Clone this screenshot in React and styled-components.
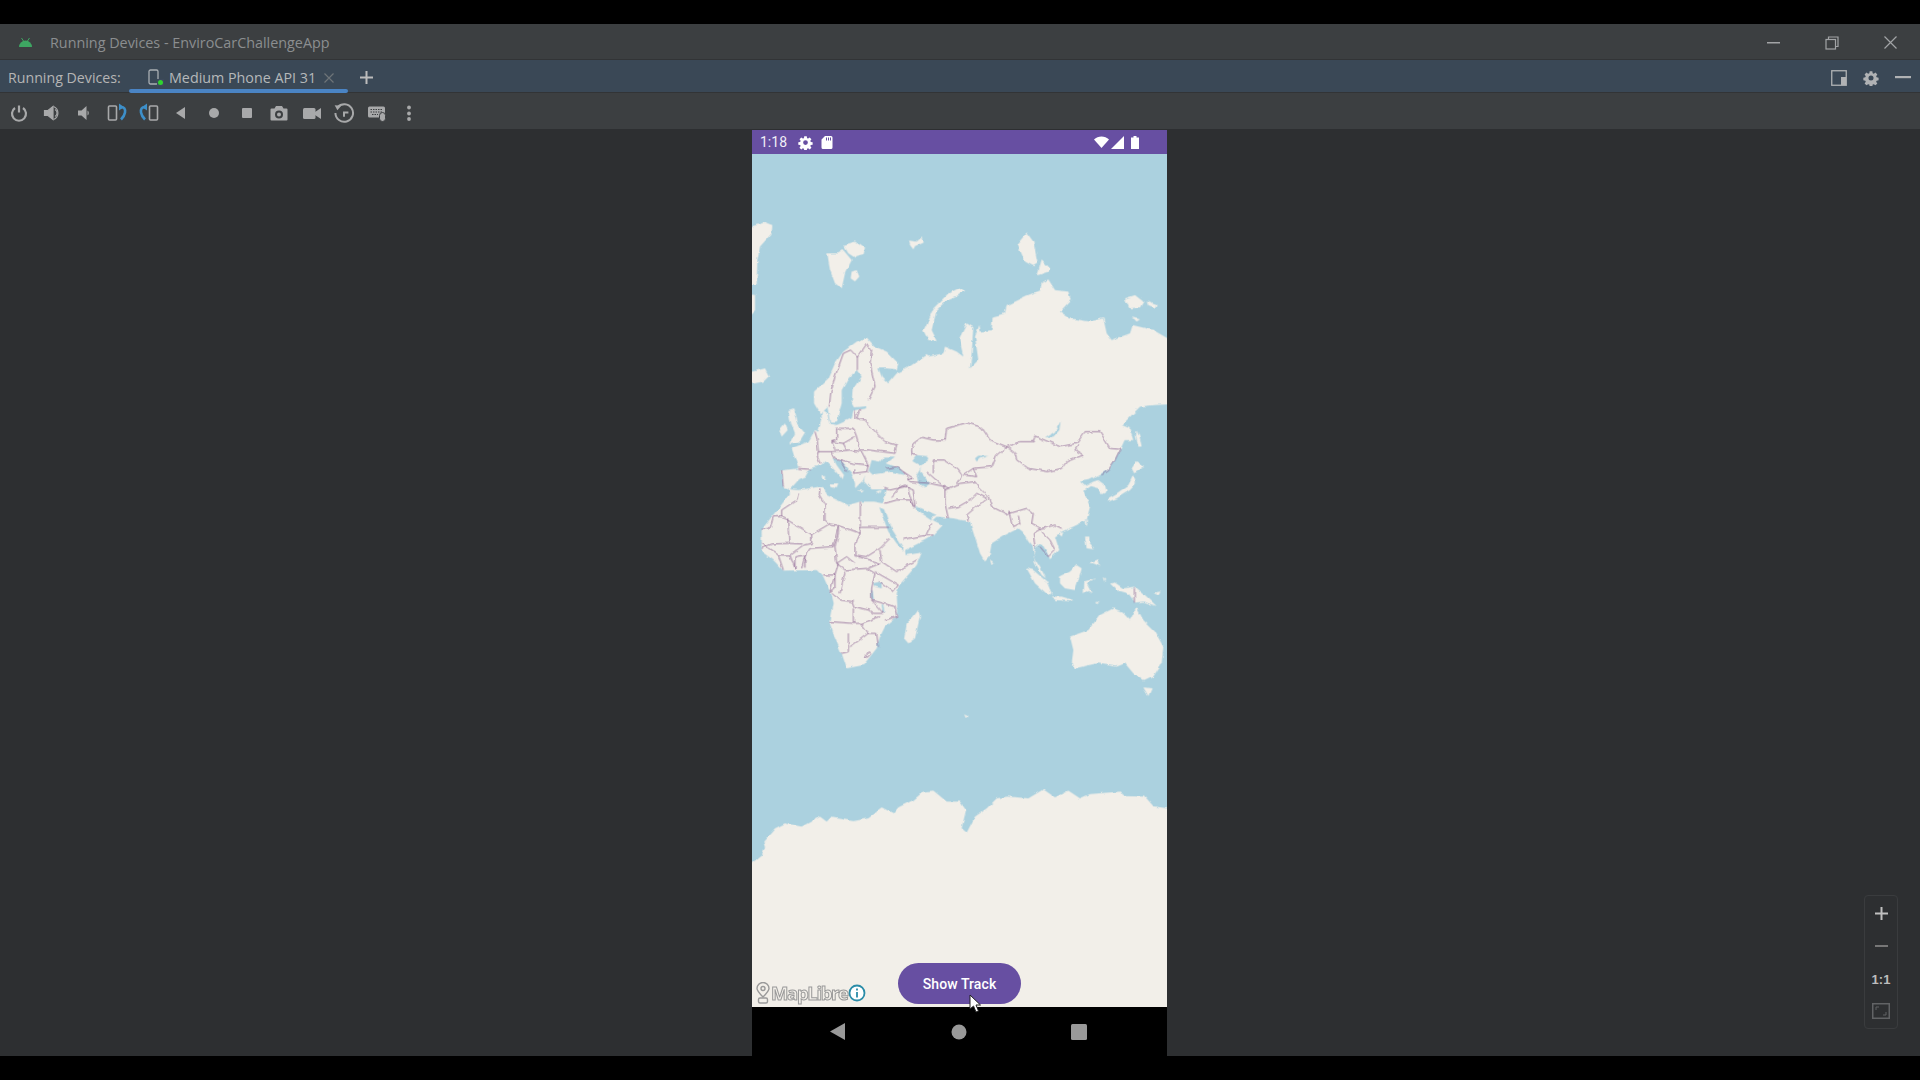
import React from "react";
import styled, { createGlobalStyle } from "styled-components";

const GlobalStyle = createGlobalStyle`
  html, body { margin: 0; padding: 0; background: #000; }
  body { font-family: "Open Sans", "Liberation Sans", sans-serif; }
`;

const WATER = "#abd1df";
const LAND = "#f2efe9";
const PURPLE = "#674fa2";
const BORDER = "#7d4f86";

// Map outlines are traced from crops, so numbers are in crop units (3 per screen px).
const arctic = [
  "16,325 75,307 97,315 95,340 60,380 52,420 50,495 16,500",
  "16,520 45,525 45,570 16,600",
  "16,760 75,745 87,768 70,785 16,795",
  "262,400 295,400 310,390 335,420 315,460 305,505 285,490 270,450",
  "310,375 345,365 375,385 370,405 345,413 325,400",
  "335,455 350,450 358,470 345,484 332,475",
  "507,362 530,365 545,352 548,368 525,378 520,388 510,375",
  "832,372 860,338 880,365 893,430 880,438 855,425",
  "905,418 930,445 925,455 892,466",
  "550,632 565,600 580,565 625,520 660,503 672,512 650,530 615,545 590,570 575,630 590,660 565,660",
  "1155,535 1185,525 1210,545 1200,562 1168,565",
  "1220,545 1250,555 1245,566 1225,558",
  "1178,592 1200,598 1190,605",
  "400,960 385,870 405,855 345,862 335,845 338,810 365,770 350,750 325,775 305,810 305,850 290,905 270,905 262,860 240,880 222,850 222,815 265,775 285,730 310,695 350,665 380,653 405,680 440,695 475,730 470,748 440,745 415,745 425,770 445,790 470,760 500,745 560,705 565,710 610,700 615,680 650,695 670,710 658,655 680,610 700,622 695,700 690,745 715,720 705,650 718,615 722,635 755,630 758,590 795,580 800,555 860,527 900,512 905,490 925,478 945,510 985,515 992,540 960,575 990,595 1050,605 1090,595 1100,640 1115,660 1170,640 1178,615 1240,630 1300,665 1300,845 1200,858 1145,915 1170,930 1180,960",
];

const continents = [
  "380,0 1300,0 1300,12 1240,15 1200,20 1145,75 1170,85 1140,150 1110,205 1075,225 1045,240 1020,245 1035,258 1060,245 1075,240 1095,255 1100,275 1085,283 1075,265 1050,258 1030,272 1050,320 1040,360 1000,380 965,395 945,410 958,450 930,478 920,455 905,430 885,445 880,470 905,510 918,535 905,525 885,490 878,440 865,425 848,395 835,385 795,405 755,430 748,470 735,485 720,460 700,395 690,365 665,360 640,355 590,350 578,360 608,375 580,405 555,420 495,450 497,465 545,458 530,495 478,555 470,580 472,620 470,650 435,680 420,710 410,745 370,795 320,805 305,760 285,715 268,665 278,610 270,575 250,530 230,510 130,512 100,480 65,455 65,390 95,350 120,320 150,280 145,265 130,262 122,212 175,205 155,145 205,125 225,90 235,95 245,55 245,30 262,40 268,70 290,75 335,55 340,32 378,25",
  "145,30 160,25 170,70 195,100 180,125 148,130 165,100 150,60",
  "118,90 135,70 143,90 125,110",
  "1190,90 1200,115 1205,140 1195,140 1188,110",
  "1175,205 1190,183 1215,198 1195,212 1183,220",
  "1180,225 1188,250 1170,270 1130,295 1105,305 1103,295 1130,280 1165,255",
  "1037,365 1045,358 1040,380",
  "1035,410 1048,410 1048,430 1062,448 1040,445",
  "1050,488 1075,478 1080,498 1060,490",
  "955,400 970,397 965,410",
  "750,478 762,485 755,497",
  "860,505 880,510 920,545 935,580 925,585 885,550",
  "935,590 965,590 1000,600 990,604 950,600",
  "960,530 990,515 1010,495 1025,505 1020,525 1005,570 975,565 960,550",
  "1030,545 1070,535 1040,550 1055,580 1040,570 1028,580",
  "1088,532 1095,535 1093,545",
  "1110,550 1125,548 1150,565 1185,560 1215,585 1250,618 1210,605 1185,608 1165,580 1130,570",
  "1240,578 1262,575 1255,587",
  "1062,608 1080,603 1068,612",
  "535,630 540,650 525,715 505,730 492,715 500,670 520,650",
  "990,710 1045,690 1080,645 1120,625 1145,635 1170,660 1190,622 1210,660 1245,695 1270,740 1265,790 1240,830 1212,843 1180,820 1155,790 1130,800 1070,790 1005,805 995,790 1000,750",
  "1210,862 1235,865 1225,888",
  "672,940 683,945 678,952",
];

const seas = [
  "150,268 175,240 195,232 210,205 240,195 255,180 270,195 305,235 310,245 298,262 312,225 290,195 280,175 300,180 335,220 345,250 345,265 370,240 375,225 372,245 395,268 440,268 432,300 428,310 400,305 360,305 325,315 260,285 250,262 240,260 175,270",
  "385,215 395,180 420,185 432,170 465,170 440,190 480,205 495,225 450,215 420,220 395,224",
  "517,183 530,165 560,168 565,180 545,195 540,215 570,250 555,262 535,250 530,225 545,200",
  "418,322 432,328 450,378 470,410 490,440 490,452 470,430 445,395",
  "525,318 545,325 590,345 575,350 575,362 550,345 535,335",
  "918,112 945,95 962,63 958,90 940,110",
  "705,175 715,167 745,168 720,175 710,185",
  "400,550 425,545 425,565 405,560",
  "393,570 398,572 402,600 396,598",
  "425,612 430,614 433,640 428,638",
];

const medIslands = [
  "270,250 295,250 290,262 275,258",
  "245,225 255,225 254,240 246,240",
  "410,275 425,270 420,280",
  "350,272 372,272 365,278",
];

const borders = [
  "361,305 361,400", "361,382 447,382",
  "361,400 290,375 268,372 215,403 125,350", "125,350 125,330 170,300 175,280",
  "255,310 255,360 268,372", "240,265 238,285 250,305 255,310",
  "125,350 100,350 90,385 65,388", "143,355 147,430 95,432 65,445",
  "215,403 215,430 190,435 150,465", "147,430 185,432",
  "295,378 280,440 210,445 195,470 195,500",
  "295,378 295,400 285,440 290,490 320,470 345,490",
  "361,400 345,435 345,465 380,470 420,445 450,415",
  "420,450 425,485 470,515 530,480", "385,505 420,490 355,470",
  "405,515 475,555 460,575 420,545",
  "290,490 315,510 380,505 405,520 395,565 395,600 430,640 400,640 385,630 345,620 340,605 300,600 275,580",
  "315,515 300,580", "250,525 285,525 285,565 270,575 295,490",
  "395,600 465,620 470,650 435,660",
  "268,665 340,670 340,625", "325,700 325,755 305,760", "340,670 365,670 390,660 420,650",
  "330,740 345,730 385,700 410,700 415,740", "365,670 385,700",
  "115,465 130,510", "115,465 150,465 165,505 165,470 195,465 185,505",
  "65,430 100,455 115,465", "435,310 470,300 510,300 525,325", "455,290 480,260 500,255 520,320",
  "490,418 545,408 580,405", "575,370 558,405",
  "225,95 232,120 235,155 232,170 240,190", "175,205 212,208", "125,210 130,260",
  "290,85 290,120 275,125 285,150", "350,110 360,150 385,150 465,160",
  "350,55 375,60 410,100 435,125 470,135 465,160", "345,55 345,30", "350,55 360,28",
  "275,125 310,130 345,110", "275,155 330,150 365,155 385,195 380,215 340,220 345,205",
  "235,155 275,155 285,175 340,190 385,195", "290,85 340,85 350,110", "310,130 320,150", "300,180 320,215",
  "440,205 470,200 490,215 510,240", "430,265 450,270 495,260", "505,240 520,235 490,215",
  "515,150 520,130 545,112 580,120 615,120 620,85 680,68 725,82 750,120 800,140",
  "800,140 840,125 880,125 885,108 925,125 960,140 1010,130 1035,95 1080,95 1110,145 1140,148 1125,180 1105,210 1085,225",
  "800,140 825,160 830,180 865,205 925,215 965,205 980,185 1030,165 1005,150 1015,135",
  "800,140 770,165 755,200 700,205 670,225",
  "580,180 580,220", "580,180 610,180 650,205 665,225 650,250",
  "560,215 600,250 630,265", "510,245 570,250 615,260 615,310 625,355",
  "615,270 660,250 705,245 715,260", "625,325 655,320 690,300 710,280 740,295 680,345 685,362",
  "715,260 745,290 755,320 805,345 810,340 860,325 880,340",
  "810,335 820,380 840,370 835,350", "880,340 875,370 905,385 880,400 885,445",
  "905,385 945,375 965,385", "905,395 930,420 945,450 925,470 900,440",
  "495,260 520,270 525,320", "670,225 710,230 700,205", "515,150 516,165 530,165",
  "376,770 385,755 392,762 382,772 376,770", "1183,562 1183,608",
];

const antarctica =
  "16,325 65,285 75,262 70,245 105,205 135,190 185,200 240,170 260,185 275,170 340,180 385,172 425,142 460,160 475,142 520,120 550,95 580,92 620,125 660,125 678,150 665,205 680,218 705,170 740,145 770,115 805,110 865,115 910,88 945,112 985,92 1020,115 1050,102 1140,95 1150,108 1215,110 1240,138 1300,148 1300,1000 16,1000";

const Screen = styled.div`
  width: 1920px;
  height: 1080px;
  padding: 24px 0;
  box-sizing: border-box;
  display: flex;
  flex-direction: column;
  overflow: hidden;
  background: #000;
`;

const TitleBar = styled.header`
  height: 36px;
  flex: none;
  display: flex;
  align-items: center;
  padding: 2px 0 0 19px;
  background: #3c3f41;
  box-sizing: border-box;
  border-bottom: 1px solid #323436;
`;

const TitleText = styled.span`
  margin-left: 18px;
  font-size: 14.35px;
  color: #8b8e90;
  white-space: nowrap;
`;

const WindowControls = styled.div`
  margin-left: auto;
  display: flex;
  align-items: center;
  padding-right: 23px;
  gap: 45px;
  color: #a2a4a6;
`;

const TabBar = styled.div`
  height: 33px;
  flex: none;
  display: flex;
  align-items: center;
  background: #3a4856;
  box-sizing: border-box;
  border-bottom: 1px solid #323436;
  padding: 3px 0 0 8px;
`;

const TabLabel = styled.span`
  width: 121px;
  font-size: 14.2px;
  color: #b5b5b5;
  white-space: nowrap;
`;

const Tab = styled.div`
  position: relative;
  width: 219px;
  height: 100%;
  display: flex;
  align-items: center;
  padding-left: 19px;
  box-sizing: border-box;
  color: #a9aeb3;
  &::after {
    content: "";
    position: absolute;
    left: 0;
    right: 0;
    bottom: -1px;
    height: 4px;
    border-radius: 2px;
    background: #4a84c4;
  }
`;

const TabName = styled.span`
  margin-left: 5px;
  font-size: 14.3px;
  color: #b5b8ba;
  white-space: nowrap;
`;

const TabClose = styled.span`
  margin-left: auto;
  margin-right: 14px;
  display: flex;
  color: #6e7478;
`;

const TabPlus = styled.span`
  margin-left: 12px;
  display: flex;
  color: #bcbcbc;
`;

const TabTools = styled.div`
  margin-left: auto;
  display: flex;
  align-items: center;
  gap: 16px;
  padding-right: 9px;
  color: #b0b2b4;
`;

const Toolbar = styled.div`
  height: 36px;
  flex: none;
  display: flex;
  align-items: center;
  padding: 3px 0 0 3px;
  background: #3c3f41;
  box-sizing: border-box;
`;

const ToolButton = styled.span`
  width: 32.5px;
  height: 100%;
  flex: none;
  display: flex;
  align-items: center;
  justify-content: center;
  color: #a8a9aa;
`;

const Main = styled.main`
  flex: 1;
  min-height: 0;
  display: grid;
  grid-template-columns: 752px 415px 1fr;
  background: #2d2f31;
`;

const Device = styled.section`
  grid-column: 2;
  display: flex;
  flex-direction: column;
  margin-top: 1px;
  min-height: 0;
`;

const StatusBar = styled.div`
  height: 24px;
  flex: none;
  display: flex;
  align-items: center;
  padding: 0 27px 0 8px;
  background: ${PURPLE};
  color: #fff;
`;

const Clock = styled.span`
  font-family: Roboto, "Liberation Sans", sans-serif;
  font-size: 14px;
  width: 38px;
  color: #f1eef7;
`;

const StatusRight = styled.div`
  margin-left: auto;
  display: flex;
  align-items: center;
  gap: 2px;
`;

const SdCard = styled.svg`
  margin-left: 8px;
`;

const Battery = styled.svg`
  margin-left: 5px;
`;

const MapArea = styled.div`
  position: relative;
  flex: 1;
  min-height: 0;
  background: ${WATER};
`;

const MapDrawing = styled.svg`
  display: block;
  width: 100%;
  height: 100%;
`;

const Attribution = styled.div`
  position: absolute;
  left: 4px;
  bottom: 3px;
  display: flex;
  align-items: center;
`;

const LogoText = styled.span`
  font-family: "Open Sans", "Liberation Sans", sans-serif;
  font-size: 18.5px;
  font-weight: 700;
  letter-spacing: -1.35px;
  line-height: 20px;
  color: #f2efe9;
  -webkit-text-stroke: 1px #9a9a9a;
  margin-left: 1px;
`;

const ShowTrack = styled.button`
  position: absolute;
  left: 146px;
  bottom: 3px;
  width: 123px;
  height: 41px;
  border: 0;
  border-radius: 21px;
  background: ${PURPLE};
  color: #fff;
  font-family: Roboto, "Liberation Sans", sans-serif;
  font-size: 14px;
  font-weight: 500;
  letter-spacing: 0.1px;
  padding: 0;
`;

const Cursor = styled.svg`
  position: absolute;
  left: 217px;
  bottom: -6px;
`;

const NavBar = styled.nav`
  height: 49px;
  flex: none;
  background: #000;
  display: grid;
  grid-template-columns: 62px 48px 73px 48px 72px 48px;
  align-items: center;
  justify-items: center;
  color: #999;
`;

const NavIcon = styled.svg`
  grid-column: ${(p) => p.$col};
`;

const ZoomColumn = styled.div`
  grid-column: 3;
  display: flex;
  justify-content: flex-end;
  align-items: flex-end;
  padding: 0 22px 27px 0;
`;

const ZoomPanel = styled.div`
  width: 34px;
  height: 134px;
  box-sizing: border-box;
  border: 1px solid #3a3c3e;
  border-radius: 4px;
  display: grid;
  grid-template-rows: repeat(4, 32.5px);
  align-content: center;
  justify-items: center;
  align-items: center;
  color: #c0c0c0;
`;

const ZoomReset = styled.span`
  font-family: "Liberation Sans", sans-serif;
  font-size: 13px;
  font-weight: 700;
  padding-top: 2px;
  color: #bdbdbd;
`;

const Stroke = ({ size = 20, children, width = 2 }) => (
  <svg width={size} height={size} viewBox="0 0 20 20" fill="none" stroke="currentColor" strokeWidth={width}>
    {children}
  </svg>
);

const Solid = ({ size = 20, children }) => (
  <svg width={size} height={size} viewBox="0 0 20 20" fill="currentColor">
    {children}
  </svg>
);

const Gear = ({ size }) => (
  <svg width={size} height={size} viewBox="0 0 24 24" fill="currentColor">
    <path fillRule="evenodd" d="M10 2h4l.5 3 1.7.7 2.5-1.8 2.8 2.8-1.8 2.5.7 1.8 3 .5v4l-3 .5-.7 1.7 1.8 2.5-2.8 2.8-2.5-1.8-1.7.7-.5 3h-4l-.5-3-1.8-.7-2.5 1.8-2.8-2.8 1.8-2.5-.7-1.7-3-.5v-4l3-.5.7-1.8-1.8-2.5 2.8-2.8 2.5 1.8 1.8-.7zM12 8.2a3.8 3.8 0 1 0 0 7.6 3.8 3.8 0 0 0 0-7.6z" />
  </svg>
);

const Android = () => (
  <svg width="13" height="9" viewBox="0 0 13 9" fill="#3ea662">
    <path d="M0 9a6.5 6.5 0 0 1 13 0z" />
    <path d="M2.5 0l2 3M10.500 0l-2 3" stroke="#3ea662" strokeWidth="1" />
  </svg>
);

const toolIcons = [
  <Stroke key="power" width={2.2}>
    <path d="M10 2.500v7" />
    <path d="M6 5a7 7 0 1 0 8 0" />
  </Stroke>,
  <Stroke key="volup" width={1.2}>
    <path d="M2.500 7.500h3.500l5-4v13l-5-4h-3.500z" fill="currentColor" />
    <path d="M13 6.500a4 4 0 0 1 0 7" />
    <path d="M11.500 3.500a7 7 0 0 1 0 13" />
  </Stroke>,
  <Solid key="voldown">
    <path d="M4 7.500h3.500l5-4.500v14l-5-4.500h-3.500z" />
    <path d="M13.500 7.500a3 3 0 0 1 0 5z" />
  </Solid>,
  <svg key="rotl" width="20" height="20" viewBox="0 0 20 20" fill="none">
    <rect x="1.500" y="3" width="8" height="14" rx="1" stroke="currentColor" strokeWidth="1.600" />
    <path d="M13.500 4.500c4-1 5 2 4.500 5-.4 2.500-2 5-4 7" stroke="#3d8fc9" strokeWidth="2.600" />
    <path d="M12 0.500l5 3.500-5 3.500z" fill="#3d8fc9" />
  </svg>,
  <svg key="rotr" width="20" height="20" viewBox="0 0 20 20" fill="none">
    <rect x="10.500" y="3" width="8" height="14" rx="1" stroke="currentColor" strokeWidth="1.600" />
    <path d="M6.500 4.500c-4-1-5 2-4.500 5 .4 2.500 2 5 4 7" stroke="#3d8fc9" strokeWidth="2.600" />
    <path d="M8 0.500l-5 3.500 5 3.500z" fill="#3d8fc9" />
  </svg>,
  <Solid key="back">
    <path d="M4 10l9-6v12z" />
  </Solid>,
  <Solid key="home">
    <circle cx="10" cy="10" r="5" />
  </Solid>,
  <Solid key="stop">
    <rect x="5" y="5" width="10" height="10" rx="1" />
  </Solid>,
  <Solid key="camera">
    <path fillRule="evenodd" d="M7 3h6l1.500 2.500h3a1 1 0 0 1 1 1v10a1 1 0 0 1-1 1h-15a1 1 0 0 1-1-1v-10a1 1 0 0 1 1-1h3zM10 7.500a4 4 0 1 0 0 8 4 4 0 0 0 0-8zM10 9.500a2 2 0 1 1 0 4 2 2 0 0 1 0-4z" />
  </Solid>,
  <Solid key="video">
    <rect x="1" y="5" width="12.500" height="11" rx="1.500" />
    <path d="M13 9l6-4v11l-6-4z" />
  </Solid>,
  <Stroke key="replay" size={22} width={1.800}>
    <path d="M4.200 4.700a8 8 0 1 1-2 5.300" />
    <path d="M1.500 3l6 .5-3.500 4z" fill="currentColor" stroke="none" />
    <path d="M14 9.500h-4v4" />
  </Stroke>,
  <svg key="keys" width="20" height="20" viewBox="0 0 20 20" fill="none">
    <rect x="1" y="3.500" width="17" height="11" rx="1.500" fill="currentColor" />
    <path d="M3.500 6.500h12M3.500 9h12M5 11.500h6" stroke="#3c3f41" strokeWidth="1" strokeDasharray="1.500 1" />
    <rect x="12.500" y="9.500" width="6" height="9" rx="3" fill="currentColor" stroke="#3c3f41" />
  </svg>,
  <Solid key="more">
    <circle cx="10" cy="4.500" r="1.900" />
    <circle cx="10" cy="10.500" r="1.900" />
    <circle cx="10" cy="16" r="1.900" />
  </Solid>,
];

const Land = ({ shapes }) => shapes.map((p) => <polygon key={p} points={p} fill={LAND} />);

const WorldMap = () => (
  <MapDrawing viewBox="36 102 1245 2559" preserveAspectRatio="none">
    <defs>
      <filter id="coast" filterUnits="userSpaceOnUse" x="0" y="0" width="1320" height="2800">
        <feTurbulence type="fractalNoise" baseFrequency="0.045" numOctaves="2" seed="4" />
        <feDisplacementMap in="SourceGraphic" scale="11" xChannelSelector="R" yChannelSelector="G" />
      </filter>
    </defs>
    <g filter="url(#coast)">
      <Land shapes={arctic} />
      <g fill="none" stroke={BORDER} strokeWidth="2">
        <polyline points="272,820 285,770 310,700 332,690 352,712 352,750" />
        <polyline points="272,820 268,860" />
        <polyline points="352,712 380,672 395,690 390,730 405,800 385,840 380,870 385,900 400,905 412,945" />
      </g>
      <g transform="translate(0 840)">
        <Land shapes={continents} />
        {seas.map((p) => (
          <polygon key={p} points={p} fill={WATER} />
        ))}
        <Land shapes={medIslands} />
        <g fill="none" stroke={BORDER} strokeWidth="2">
          {borders.map((p) => (
            <polyline key={p} points={p} />
          ))}
        </g>
      </g>
      <g transform="translate(0 1920)">
        <polygon points={antarctica} fill={LAND} />
      </g>
    </g>
  </MapDrawing>
);

export default function App() {
  return (
    <Screen>
      <GlobalStyle />
      <TitleBar>
        <Android />
        <TitleText>Running Devices - EnviroCarChallengeApp</TitleText>
        <WindowControls>
          <svg width="13" height="2" viewBox="0 0 13 2" fill="currentColor">
            <rect width="13" height="1.500" />
          </svg>
          <svg width="14" height="14" viewBox="0 0 14 14" fill="none" stroke="currentColor" strokeWidth="1.200">
            <rect x="1" y="3.500" width="9.500" height="9.500" />
            <path d="M3.500 3.500V1H13v9.500h-2.500" />
          </svg>
          <svg width="13" height="13" viewBox="0 0 13 13" stroke="currentColor" strokeWidth="1.200">
            <path d="M.5.500l12 12M12.500.500l-12 12" />
          </svg>
        </WindowControls>
      </TitleBar>

      <TabBar>
        <TabLabel>Running Devices:</TabLabel>
        <Tab>
          <svg width="16" height="18" viewBox="0 0 16 18" fill="none">
            <rect x="1" y="1" width="9" height="14" rx="1.500" stroke="currentColor" strokeWidth="1.300" />
            <rect x="9" y="10" width="7" height="7" fill="#3d4a5c" />
            <circle cx="12.500" cy="13.500" r="2.500" fill="#2fd42f" />
          </svg>
          <TabName>Medium Phone API 31</TabName>
          <TabClose>
            <svg width="10" height="10" viewBox="0 0 10 10" stroke="currentColor" strokeWidth="1.200">
              <path d="M.5.500l9 9M9.500.500l-9 9" />
            </svg>
          </TabClose>
        </Tab>
        <TabPlus>
          <svg width="13" height="13" viewBox="0 0 13 13" stroke="currentColor" strokeWidth="2">
            <path d="M6.500 0v13M0 6.500h13" />
          </svg>
        </TabPlus>
        <TabTools>
          <svg width="16" height="16" viewBox="0 0 16 16" fill="none">
            <rect x=".75" y=".75" width="14.500" height="14.500" stroke="currentColor" strokeWidth="1.300" />
            <rect x="10" y="7" width="5" height="8" fill="currentColor" />
          </svg>
          <Gear size={16} />
          <svg width="16" height="3" viewBox="0 0 16 3" fill="currentColor">
            <rect width="16" height="2.200" />
          </svg>
        </TabTools>
      </TabBar>

      <Toolbar>
        {toolIcons.map((icon) => (
          <ToolButton key={icon.key}>{icon}</ToolButton>
        ))}
      </Toolbar>

      <Main>
        <Device>
          <StatusBar>
            <Clock>1:18</Clock>
            <Gear size={15} />
            <SdCard width="12" height="14" viewBox="0 0 12 14" fill="currentColor">
              <path fillRule="evenodd" d="M4 1h6a1.500 1.500 0 0 1 1.500 1.500v10A1.500 1.500 0 0 1 10 14H2a1.500 1.500 0 0 1-1.500-1.500V4.500zM5 2.500v3h1v-3zM7 2.500v3h1v-3zM9 2.500v3h1v-3z" />
            </SdCard>
            <StatusRight>
              <svg width="15" height="12" viewBox="0 0 15 12" fill="currentColor">
                <path d="M0 3.500C4 -.5 11 -.5 15 3.500L7.500 12z" />
              </svg>
              <svg width="13" height="13" viewBox="0 0 13 13" fill="currentColor">
                <path d="M13 0v13H0z" />
              </svg>
              <Battery width="9" height="13" viewBox="0 0 9 13" fill="currentColor">
                <path d="M2.500 0h3v1.500h2.500V13H0V1.500h2.500z" />
              </Battery>
            </StatusRight>
          </StatusBar>

          <MapArea>
            <WorldMap />
            <Attribution>
              <svg width="14" height="22" viewBox="0 0 14 22" fill="#f2efe9" stroke="#9a9a9a" strokeWidth="1.400">
                <path d="M7 15C3 11 1 9 1 6.500a6 6 0 0 1 12 0C13 9 11 11 7 15z" />
                <circle cx="7" cy="6.500" r="2" />
                <rect x="2.500" y="16" width="9" height="5" rx="1.500" />
              </svg>
              <LogoText>MapLibre</LogoText>
              <svg width="18" height="18" viewBox="0 0 18 18" fill="none" stroke="#2a8ca8" strokeWidth="1.800">
                <circle cx="9" cy="9" r="7.500" fill="#fff" />
                <path d="M9 8v5.500M9 4.500v2" />
              </svg>
            </Attribution>
            <ShowTrack>Show Track</ShowTrack>
            <Cursor width="13" height="19" viewBox="0 0 13 19">
              <path d="M1 1v14l3.500-3 2.500 6 2.500-1-2.500-6h4.500z" fill="#fff" stroke="#222" strokeWidth="1" />
            </Cursor>
          </MapArea>

          <NavBar>
            <NavIcon $col={2} width="16" height="17" viewBox="0 0 16 17" fill="currentColor">
              <path d="M0 8.500L15 0v17z" />
            </NavIcon>
            <NavIcon $col={4} width="16" height="16" viewBox="0 0 16 16" fill="currentColor">
              <circle cx="8" cy="8" r="7.500" />
            </NavIcon>
            <NavIcon $col={6} width="16" height="16" viewBox="0 0 16 16" fill="currentColor">
              <rect width="16" height="16" rx="1.500" />
            </NavIcon>
          </NavBar>
        </Device>

        <ZoomColumn>
          <ZoomPanel>
            <svg width="13" height="13" viewBox="0 0 13 13" stroke="currentColor" strokeWidth="2">
              <path d="M6.500 0v13M0 6.500h13" />
            </svg>
            <svg width="13" height="2" viewBox="0 0 13 2" fill="#777">
              <rect width="13" height="2" />
            </svg>
            <ZoomReset>1:1</ZoomReset>
            <svg width="18" height="16" viewBox="0 0 18 16" fill="none" stroke="#616365" strokeWidth="1.500">
              <rect x=".75" y=".75" width="16.500" height="14.500" />
              <path d="M4 7V4h3M14 9v3h-3" strokeWidth="1" />
            </svg>
          </ZoomPanel>
        </ZoomColumn>
      </Main>
    </Screen>
  );
}
